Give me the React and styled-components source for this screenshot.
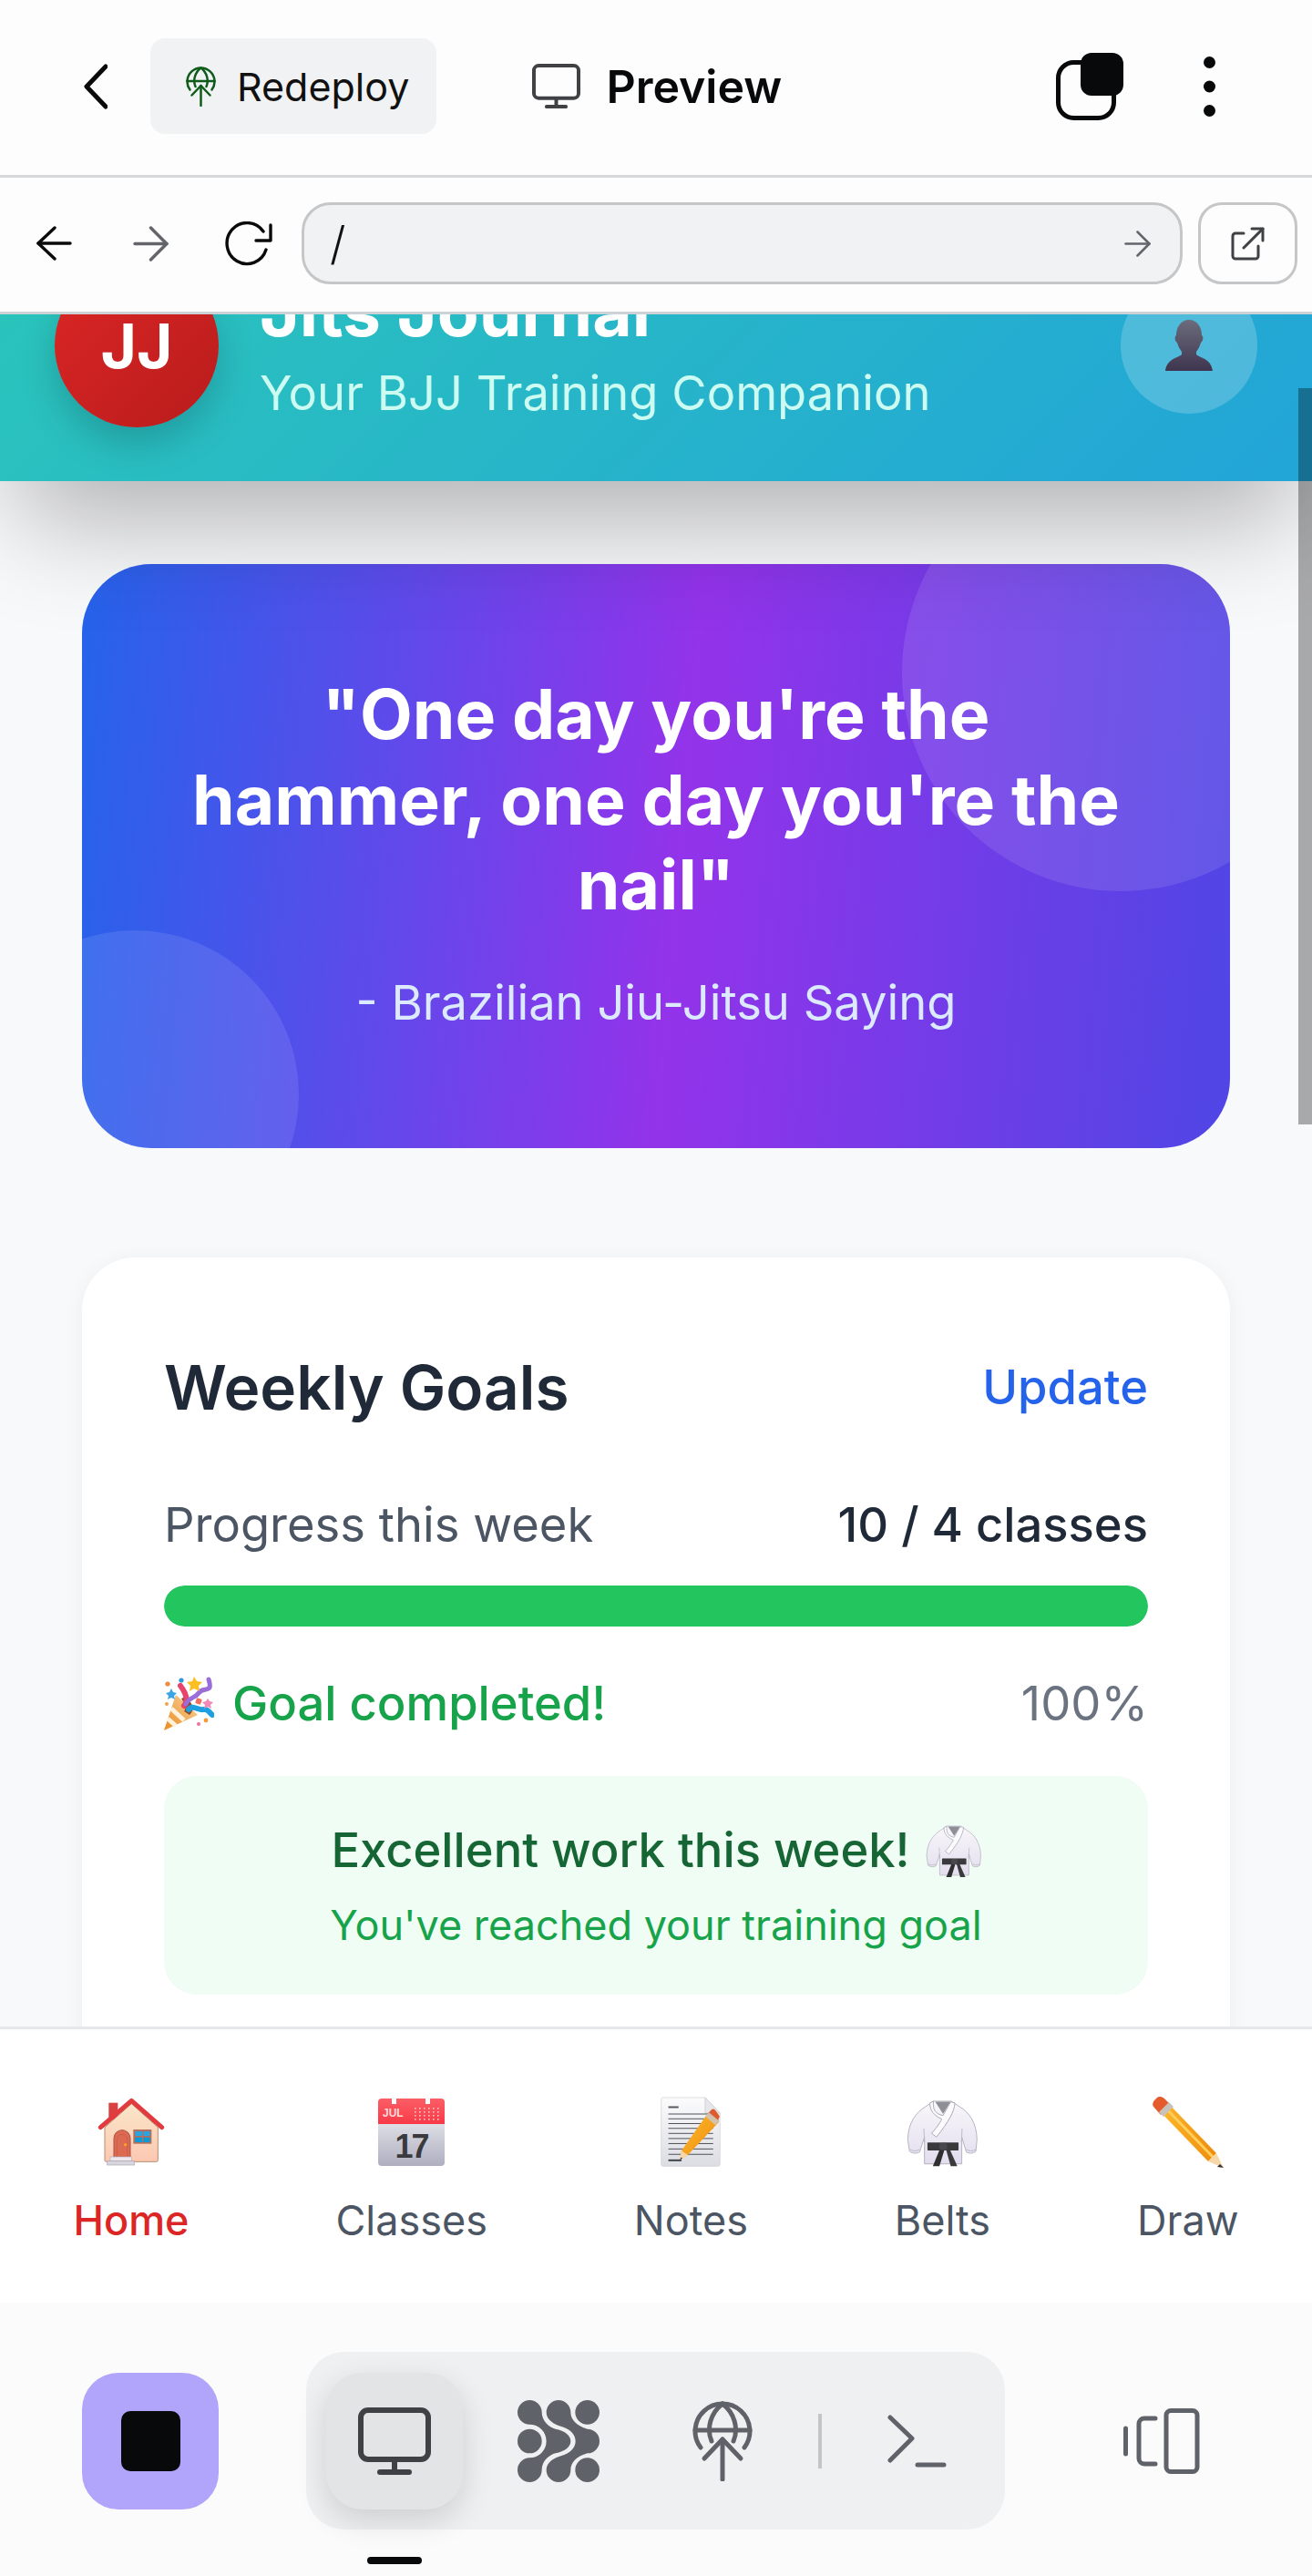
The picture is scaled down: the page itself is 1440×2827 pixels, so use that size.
import React from "react";
import styled, { createGlobalStyle } from "styled-components";

const GlobalStyle = createGlobalStyle`
  * {
    box-sizing: border-box;
  }
  body {
    margin: 0;
    background: #fbfbfb;
    font-family: Inter, "Noto Sans", sans-serif;
    -webkit-font-smoothing: antialiased;
  }
`;

const BackIcon = () => (
  <svg width="26" height="50" viewBox="0 0 26 50" fill="none" stroke="#0a0a0a" strokeWidth="5" strokeLinecap="round" strokeLinejoin="round">
    <path d="M24 3L3 25L24 47" />
  </svg>
);

const GlobeUpIcon = ({ width, color }) => (
  <svg width={width} height={(width * 88) / 66} viewBox="0 0 66 88" fill="none" stroke={color} strokeWidth="5" strokeLinecap="round" strokeLinejoin="round">
    <path d="M9 51A30 30 0 1 1 57 51" />
    <path d="M3 32H63" />
    <path d="M33 3C20 13 15 30 21 44" />
    <path d="M33 3C46 13 51 30 45 44" />
    <path d="M33 86V42" />
    <path d="M13 63L33 42L53 63" />
  </svg>
);

const MonitorIcon = ({ width, color }) => (
  <svg width={width} height={(width * 74) / 80} viewBox="0 0 80 74" fill="none" stroke={color} strokeWidth="6" strokeLinecap="round" strokeLinejoin="round">
    <rect x="3" y="3" width="74" height="54" rx="8" />
    <path d="M40 58V70" />
    <path d="M24 71H56" />
  </svg>
);

const TabsIcon = () => (
  <svg width="74" height="74" viewBox="0 0 74 74">
    <rect x="2.5" y="10.5" width="61" height="61" rx="17" fill="none" stroke="#08090b" strokeWidth="5" />
    <rect x="27" y="0" width="47" height="47" rx="12" fill="#08090b" />
  </svg>
);

const KebabIcon = () => (
  <svg width="13" height="66" viewBox="0 0 13 66" fill="#08090b">
    <circle cx="6.5" cy="6.5" r="6.5" />
    <circle cx="6.5" cy="33" r="6.5" />
    <circle cx="6.5" cy="59.5" r="6.5" />
  </svg>
);

const ArrowLeft = () => (
  <svg width="39" height="38" viewBox="0 0 39 38" fill="none" stroke="#0a0a0a" strokeWidth="3.4" strokeLinecap="round" strokeLinejoin="round">
    <path d="M37 19H2" />
    <path d="M20 2L2 19L20 36" />
  </svg>
);

const ArrowRight = ({ size, color }) => (
  <svg width={size} height={size} viewBox="0 0 38 38" fill="none" stroke={color} strokeWidth="3.4" strokeLinecap="round" strokeLinejoin="round">
    <path d="M2 19H36" />
    <path d="M19 2L36 19L19 36" />
  </svg>
);

const ReloadIcon = () => (
  <svg width="53" height="49" viewBox="0 0 53 49" fill="none" stroke="#0a0a0a" strokeWidth="3.4" strokeLinecap="round" strokeLinejoin="round">
    <path d="M46 31A22 22.5 0 1 1 43 11" />
    <path d="M51 4V21H35" />
  </svg>
);

const ExternalIcon = () => (
  <svg width="37" height="37" viewBox="0 0 37 37" fill="none" stroke="#3f4145" strokeWidth="3" strokeLinecap="round" strokeLinejoin="round">
    <path d="M14 7H5a3 3 0 0 0-3 3V32a3 3 0 0 0 3 3H27a3 3 0 0 0 3-3V21" />
    <path d="M14 23L35 2" />
    <path d="M23 2H35V15" />
  </svg>
);

const LogoIcon = () => (
  <svg width="90" height="90" viewBox="45 45 270 270" fill="#5f6268">
    <circle cx="275" cy="85" r="40" />
    <circle cx="85" cy="180" r="40" />
    <circle cx="275" cy="275" r="40" />
    <path d="M85 45A40 40 0 0 1 125 85C125 115 150 135 170 140C200 146 220 160 220 180C220 200 200 214 170 220C150 225 125 245 125 275A40 40 0 0 1 45 275A40 40 0 0 1 85 235A55 55 0 0 0 85 125A40 40 0 0 1 85 45Z" />
    <path d="M180 45A40 40 0 0 1 220 85C220 110 240 130 275 140A40 40 0 0 1 275 220C240 230 220 250 220 275A40 40 0 0 1 140 275C140 250 165 235 190 228C220 220 236 200 236 180C236 160 220 140 190 132C165 125 140 110 140 85A40 40 0 0 1 180 45Z" />
  </svg>
);

const TerminalIcon = () => (
  <svg width="66" height="58" viewBox="0 0 66 58" fill="none" stroke="#5f6268" strokeWidth="5" strokeLinecap="round" strokeLinejoin="round">
    <path d="M3 3L27 26L3 50" />
    <path d="M33 55H62" />
  </svg>
);

const PaneIcon = () => (
  <svg width="84" height="72" viewBox="0 0 84 72" fill="none" stroke="#5f6268" strokeWidth="5" strokeLinecap="round" strokeLinejoin="round">
    <path d="M2.5 22V50" />
    <path d="M35 11H23a6 6 0 0 0-6 6V55a6 6 0 0 0 6 6H35" />
    <rect x="47" y="2.5" width="34" height="67" rx="5" />
  </svg>
);

const BustEmoji = () => (
  <svg width="52" height="57" viewBox="0 0 52 57">
    <defs>
      <linearGradient id="bustFill" x1="0" y1="0" x2="0" y2="1">
        <stop offset="0" stopColor="#6b6c7c" />
        <stop offset="1" stopColor="#3f3550" />
      </linearGradient>
    </defs>
    <path
      fill="url(#bustFill)"
      d="M26 0C17 0 12 8 12 17C10 18 10 23 13 25C14 29 16 32 18 35V38C14 42 2 42 0 56H52C50 42 38 42 34 38V35C36 32 38 29 39 25C42 23 42 18 40 17C40 8 35 0 26 0Z"
    />
  </svg>
);

const HouseEmoji = () => (
  <svg width="74" height="76" viewBox="38 38 222 228">
    <defs>
      <linearGradient id="wallFill" x1="0" y1="0" x2="0" y2="1">
        <stop offset="0" stopColor="#f9e6c8" />
        <stop offset="1" stopColor="#fdc8b2" />
      </linearGradient>
    </defs>
    <rect x="75" y="55" width="30" height="55" fill="#d9403f" />
    <path d="M150 58L62 136V244a5 5 0 0 0 5 5H232a5 5 0 0 0 5-5V136Z" fill="url(#wallFill)" stroke="#b98d6d" strokeWidth="3" />
    <path d="M48 136L150 48L250 136" fill="none" stroke="#e23b3f" strokeWidth="15" strokeLinecap="round" strokeLinejoin="round" />
    <path d="M92 234V172a27 27 0 0 1 54 0V234Z" fill="#dc6a52" stroke="#a9503e" strokeWidth="3" />
    <path d="M102 234V176a17 17 0 0 1 34 0V234" fill="none" stroke="#c8543f" strokeWidth="2" />
    <circle cx="130" cy="193" r="5" fill="#f5a623" />
    <rect x="156" y="143" width="60" height="47" fill="#b06f5f" />
    <rect x="162" y="149" width="23" height="15" fill="#2aa4e0" />
    <rect x="189" y="149" width="22" height="15" fill="#2aa4e0" />
    <rect x="162" y="169" width="23" height="16" fill="#0c9ad6" />
    <rect x="189" y="169" width="22" height="16" fill="#0c9ad6" />
    <rect x="80" y="233" width="70" height="14" fill="#ece8ee" stroke="#b5b0bc" strokeWidth="2" />
    <rect x="70" y="247" width="90" height="13" fill="#d9d5de" stroke="#aaa5b2" strokeWidth="2" />
  </svg>
);

const CalendarEmoji = () => (
  <svg width="73" height="74" viewBox="0 0 73 74">
    <defs>
      <linearGradient id="calendarPage" x1="0" y1="0" x2="0" y2="1">
        <stop offset="0" stopColor="#fbfbfc" />
        <stop offset="1" stopColor="#aeaec0" />
      </linearGradient>
      <linearGradient id="calendarTop" x1="0" y1="0" x2="0" y2="1">
        <stop offset="0" stopColor="#fb5e66" />
        <stop offset="1" stopColor="#f83a48" />
      </linearGradient>
    </defs>
    <rect x="0" y="0" width="73" height="74" rx="4" fill="url(#calendarPage)" />
    <path d="M4 0H69a4 4 0 0 1 4 4V28H0V4a4 4 0 0 1 4-4Z" fill="url(#calendarTop)" />
    <rect x="15" y="0" width="5" height="6" fill="#fff" />
    <rect x="52" y="0" width="5" height="6" fill="#fff" />
    <text x="5" y="20" fontFamily="'Liberation Sans', sans-serif" fontSize="12" fontWeight="700" fill="#ffd9dc">
      JUL
    </text>
    {[10, 14, 18, 22].map((y) =>
      [40, 45, 50, 55, 60, 65].map((x) => (
        <rect key={`${x}-${y}`} x={x} y={y} width="1.6" height="1.6" fill="#ffc9cd" />
      ))
    )}
    <text x="36.5" y="65" textAnchor="middle" fontFamily="'Liberation Sans', sans-serif" fontSize="36" fontWeight="700" letterSpacing="-2" fill="#3a3a3e">
      17
    </text>
  </svg>
);

const MemoEmoji = () => (
  <svg width="68" height="78" viewBox="15 15 203 238">
    <defs>
      <linearGradient id="memoPaper" x1="0" y1="0" x2="0" y2="1">
        <stop offset="0" stopColor="#fbfbfc" />
        <stop offset="1" stopColor="#dcdde3" />
      </linearGradient>
      <linearGradient id="memoPencil" x1="0" y1="0" x2="1" y2="1">
        <stop offset="0" stopColor="#fdbb2e" />
        <stop offset="1" stopColor="#ee8a0c" />
      </linearGradient>
    </defs>
    <path d="M24 18H165L215 70V240a8 8 0 0 1-8 8H24a6 6 0 0 1-6-6V24a6 6 0 0 1 6-6Z" fill="url(#memoPaper)" stroke="#cfd0d6" strokeWidth="2" />
    <path d="M165 18V70H215Z" fill="#e6e7eb" stroke="#c4c5cb" strokeWidth="2" />
    <path d="M42 50H76" stroke="#55585f" strokeWidth="6" />
    <g stroke="#4c4f57" strokeWidth="3">
      {[73, 89, 105, 121, 138, 155, 172, 190, 208].map((y) => (
        <path key={y} d={`M42 ${y}H192`} />
      ))}
    </g>
    <path d="M42 228H86" stroke="#3d4047" strokeWidth="6" />
    <path d="M173 72L210 101L107 210L80 226L86 196Z" fill="url(#memoPencil)" />
    <path d="M86 196L107 210L80 226Z" fill="#f6d7a8" />
    <path d="M85 218L89 222L80 226Z" fill="#2f2f33" />
    <path d="M173 72L185 60a10 10 0 0 1 14 0L210 75a9 9 0 0 1 0 13L210 101Z" fill="#dc5a2c" />
    <path d="M165 80L178 68L212 96L199 110Z" fill="#cfc7bd" opacity="0.9" />
  </svg>
);

const GiEmoji = ({ width, id }) => (
  <svg width={width} height={(width * 76) / 78} viewBox="28 18 238 232">
    <defs>
      <linearGradient id={id} x1="0" y1="0" x2="0" y2="1">
        <stop offset="0" stopColor="#f8f7fa" />
        <stop offset="1" stopColor="#e3ddee" />
      </linearGradient>
    </defs>
    <path d="M118 30H178L205 48C238 68 262 100 264 158L260 198C250 206 238 206 228 200L213 150V240H88V150L72 200C62 206 50 206 38 198L32 158C34 100 60 68 92 48Z" fill={`url(#${id})`} stroke="#b5b2c0" strokeWidth="3" />
    <path d="M124 32H176L150 72Z" fill="#8e8e96" />
    <path d="M118 30C116 60 124 72 150 78L176 32L190 36C188 64 170 98 128 150L112 138C134 112 144 96 146 90C120 78 106 62 106 36Z" fill="#fcfcfe" stroke="#a9a6b4" strokeWidth="3" />
    <path d="M86 122L88 168M214 122L212 168M40 192C50 198 62 198 72 192M228 192C238 198 250 198 260 192" stroke="#bcb9c7" strokeWidth="3" fill="none" />
    <rect x="98" y="168" width="104" height="27" rx="2" fill="#3a3a3d" />
    <path d="M142 184L116 248H138L154 196Z" fill="#2f2f32" />
    <path d="M158 184L176 248H198L172 190Z" fill="#3a3a3d" />
    <rect x="138" y="170" width="26" height="24" rx="7" fill="#49494d" />
  </svg>
);

const PencilEmoji = () => (
  <svg width="78" height="78" viewBox="0 0 78 78">
    <defs>
      <linearGradient id="pencilBody" x1="0" y1="0" x2="1" y2="0">
        <stop offset="0" stopColor="#fdba2c" />
        <stop offset="1" stopColor="#ee8b0b" />
      </linearGradient>
    </defs>
    <path d="M7 15L16 6L70 62L61 71Z" fill="url(#pencilBody)" />
    <path d="M12 10L66 66" stroke="#ffce5c" strokeWidth="3" />
    <path d="M2 12C-1 9 0 6 3 3L5 1C8 -1 10 0 13 2L20 9L9 20Z" fill="#e45c2b" />
    <path d="M7 17L18 6L23 11L12 22Z" fill="#c9c2b9" />
    <path d="M61 71L70 62L78 78Z" fill="#f6d7a8" />
    <path d="M74 74L78 78L71 77Z" fill="#2f2f33" />
  </svg>
);

const PartyEmoji = () => (
  <svg width="55" height="59" viewBox="0 0 55 59">
    <defs>
      <linearGradient id="coneFill" x1="0" y1="1" x2="1" y2="0">
        <stop offset="0" stopColor="#ea8a1c" />
        <stop offset="1" stopColor="#f8d7a6" />
      </linearGradient>
    </defs>
    <path d="M0 59L13 20L37 42Z" fill="url(#coneFill)" />
    <path d="M8 35L22 48M4 46L13 54" stroke="#fff3df" strokeWidth="5" fill="none" />
    <path d="M19 24C24 32 24 36 22 38L28 42C34 36 32 30 24 22Z" fill="#8a4a26" />
    <path d="M22 32C27 26 24 18 18 10" stroke="#e8436a" strokeWidth="6" fill="none" strokeLinecap="round" />
    <path d="M24 30C28 22 34 24 38 18C42 12 47 16 50 12C51 9 50 6 49 3" stroke="#9a6ddb" strokeWidth="5" fill="none" strokeLinecap="round" />
    <path d="M27 36C32 30 38 38 44 36C48 35 50 40 53 42" stroke="#1e9fe0" strokeWidth="6" fill="none" strokeLinecap="round" />
    <path d="M33 0L36 5L42 6L38 10L39 16L33 13L28 16L29 10L25 6L31 5Z" fill="#fbbf24" />
    <path d="M8 13L10 17L14 18L11 21L12 25L8 23L4 25L5 21L2 18L6 17Z" fill="#3ba4e8" />
    <circle cx="4" cy="8" r="2.6" fill="#f08a3c" />
    <circle cx="19" cy="4" r="2.6" fill="#2e97dc" />
    <circle cx="3" cy="30" r="2" fill="#f4a24a" />
    <rect x="35" y="24" width="6" height="6" rx="1" fill="#ef6f5c" transform="rotate(20 38 27)" />
    <path d="M48 24L50 27L54 28L51 31L52 35L48 33L44 35L45 31L42 28L46 27Z" fill="#f28ab8" />
    <circle cx="46" cy="48" r="2.4" fill="#f59a3c" />
    <circle cx="38" cy="52" r="2" fill="#ef6f9c" />
  </svg>
);

const Page = styled.div`
  width: 1440px;
  height: 2827px;
  overflow: hidden;
  background: #fbfbfb;
`;

const TopBar = styled.header`
  height: 195px;
  padding: 0 106px 3px 92px;
  display: flex;
  align-items: center;
  background: #fdfdfd;
  border-bottom: 3px solid #d5d7d9;
`;

const RedeployButton = styled.div`
  height: 105px;
  margin-left: 47px;
  padding: 0 30px 0 39px;
  display: flex;
  align-items: center;
  gap: 23px;
  background: #f1f2f4;
  border-radius: 16px;
  font-size: 43px;
  color: #111;
`;

const PreviewTab = styled.div`
  margin-left: 105px;
  display: flex;
  align-items: center;
  gap: 28px;
  font-size: 50px;
  font-weight: 600;
  color: #08090b;
`;

const TopActions = styled.div`
  margin-left: auto;
  display: flex;
  align-items: center;
  gap: 88px;
`;

const UrlRow = styled.div`
  height: 150px;
  padding: 0 16px 3px 40px;
  display: flex;
  align-items: center;
  background: #fdfdfd;
  border-bottom: 3px solid #ccd2d5;
`;

const HistoryButton = styled.div`
  display: flex;
  margin-right: ${(p) => p.$gap}px;
`;

const UrlField = styled.div`
  width: 967px;
  height: 90px;
  padding: 0 32px 0 28px;
  display: flex;
  align-items: center;
  justify-content: space-between;
  background: #f1f2f4;
  border: 3px solid #c4c6c8;
  border-radius: 32px;
  font-size: 50px;
  font-weight: 300;
  color: #111;
`;

const ExternalButton = styled.div`
  width: 109px;
  height: 90px;
  margin-left: 17px;
  display: flex;
  align-items: center;
  justify-content: center;
  border: 3px solid #c4c6c8;
  border-radius: 26px;
`;

const AppViewport = styled.main`
  position: relative;
  height: 1879px;
  overflow: hidden;
  background: #f8f9fb;
`;

const ScrollThumb = styled.div`
  position: absolute;
  top: 81px;
  right: 0;
  z-index: 3;
  width: 15px;
  height: 808px;
  background: rgba(0, 0, 0, 0.32);
`;

const AppHeader = styled.div`
  position: relative;
  z-index: 2;
  margin-top: -115px;
  padding: 59px 60px;
  display: flex;
  align-items: center;
  gap: 45px;
  background: linear-gradient(135deg, #2bc6ba, #22a4d8);
  box-shadow: 0 60px 120px -20px rgba(0, 0, 0, 0.3);
`;

const Avatar = styled.div`
  width: 180px;
  height: 180px;
  flex-shrink: 0;
  display: flex;
  align-items: center;
  justify-content: center;
  border-radius: 50%;
  background: linear-gradient(135deg, #dc2626, #b91c1c);
  box-shadow: 0 18px 40px rgba(0, 0, 0, 0.18);
  font-size: 67.5px;
  font-weight: 700;
  color: #fff;
`;

const BrandText = styled.div`
  flex: 1;
`;

const BrandTitle = styled.h1`
  margin: 0;
  font-size: 75px;
  line-height: 105px;
  font-weight: 700;
  color: #fff;
`;

const BrandSubtitle = styled.p`
  margin: 0;
  font-size: 52.5px;
  line-height: 75px;
  color: #ccfbf1;
`;

const ProfileButton = styled.div`
  width: 150px;
  height: 150px;
  display: flex;
  align-items: center;
  justify-content: center;
  border-radius: 50%;
  background: rgba(255, 255, 255, 0.2);
`;

const Content = styled.div`
  padding: 91px 90px 0;
  display: flex;
  flex-direction: column;
  gap: 120px;
`;

const QuoteCard = styled.section`
  position: relative;
  overflow: hidden;
  padding: 118px 110px 122px;
  border-radius: 76px;
  background: linear-gradient(95deg, #2563eb, #9333ea 52%, #4f46e5);
  text-align: center;
`;

const QuoteBlob = styled.div`
  position: absolute;
  width: ${(p) => p.$size}px;
  height: ${(p) => p.$size}px;
  border-radius: 50%;
  background: rgba(255, 255, 255, 0.1);
  ${(p) => (p.$corner === "top" ? "top: -121px; right: -120px;" : "bottom: -121px; left: -122px;")}
`;

const QuoteText = styled.p`
  position: relative;
  margin: 0 0 45px;
  font-size: 75px;
  line-height: 93.6px;
  font-weight: 700;
  color: #fff;
`;

const QuoteSource = styled.p`
  position: relative;
  margin: 0;
  font-size: 52.5px;
  line-height: 75px;
  color: #dbeafe;
`;

const GoalsCard = styled.section`
  padding: 90px;
  background: #fff;
  border-radius: 58px;
  box-shadow: 0 4px 24px rgba(0, 0, 0, 0.05);
`;

const CardHead = styled.div`
  display: flex;
  align-items: center;
  justify-content: space-between;
  margin-bottom: 61px;
`;

const CardTitle = styled.h2`
  margin: 0;
  font-size: 67.5px;
  line-height: 105px;
  font-weight: 600;
  color: #1f2937;
`;

const UpdateLink = styled.span`
  font-size: 52.5px;
  font-weight: 500;
  color: #2563eb;
`;

const StatRow = styled.div`
  display: flex;
  align-items: center;
  justify-content: space-between;
  margin-bottom: ${(p) => p.$gap}px;
  font-size: 52.5px;
  line-height: 75px;
`;

const StatLabel = styled.span`
  color: #4b5563;
`;

const StatValue = styled.span`
  font-weight: 500;
  color: #1f2937;
`;

const ProgressTrack = styled.div`
  height: 45px;
  margin-bottom: 47px;
  border-radius: 23px;
  background: #e5e7eb;
  overflow: hidden;
`;

const ProgressFill = styled.div`
  height: 100%;
  border-radius: 23px;
  background: #22c55e;
`;

const GoalDone = styled.span`
  display: flex;
  align-items: center;
  gap: 20px;
  font-weight: 500;
  color: #16a34a;
`;

const Percent = styled.span`
  color: #6b7280;
`;

const SuccessBox = styled.div`
  padding: 44px 0 46px;
  border-radius: 36px;
  background: #f0fdf4;
  text-align: center;
`;

const SuccessTitle = styled.p`
  margin: 0 0 15px;
  display: flex;
  align-items: center;
  justify-content: center;
  gap: 17px;
  font-size: 52.5px;
  line-height: 75px;
  font-weight: 500;
  color: #166534;
`;

const SuccessText = styled.p`
  margin: 0;
  font-size: 45px;
  line-height: 60px;
  color: #16a34a;
`;

const BottomNav = styled.nav`
  height: 303px;
  padding-top: 74px;
  display: flex;
  justify-content: space-around;
  align-items: flex-start;
  background: #fff;
  border-top: 3px solid #e5e7eb;
`;

const NavItem = styled.div`
  display: flex;
  flex-direction: column;
  align-items: center;
  gap: 29px;
  font-size: 45px;
  line-height: 58px;
  font-weight: ${(p) => (p.$active ? 500 : 400)};
  color: ${(p) => (p.$active ? "#dc2626" : "#4b5563")};
`;

const NavIcon = styled.div`
  height: 78px;
  display: flex;
  align-items: center;
  justify-content: center;
`;

const ToolDock = styled.div`
  height: 300px;
  padding-top: 54px;
  background: #fbfbfb;
`;

const ToolRow = styled.div`
  padding-left: 90px;
  display: flex;
  align-items: center;
`;

const StopButton = styled.div`
  width: 150px;
  height: 150px;
  display: flex;
  align-items: center;
  justify-content: center;
  border-radius: 40px;
  background: #b0a5fb;
`;

const StopSquare = styled.div`
  width: 65px;
  height: 66px;
  border-radius: 10px;
  background: #08090b;
`;

const ToolGroup = styled.div`
  width: 767px;
  height: 195px;
  margin-left: 96px;
  padding: 0 21px 0 22px;
  display: flex;
  align-items: center;
  gap: 30px;
  border-radius: 42px;
  background: #eff0f2;
`;

const ToolTile = styled.div`
  width: 150px;
  height: 150px;
  flex-shrink: 0;
  display: flex;
  align-items: center;
  justify-content: center;
  border-radius: 40px;
  background: ${(p) => (p.$active ? "#e3e4e6" : "transparent")};
  box-shadow: ${(p) => (p.$active ? "0 12px 34px rgba(0, 0, 0, 0.14)" : "none")};
`;

const ToolDivider = styled.div`
  width: 4px;
  height: 60px;
  flex-shrink: 0;
  background: #c4c5c7;
`;

const PaneButton = styled.div`
  margin-left: 130px;
  display: flex;
`;

const HomeIndicator = styled.div`
  width: 60px;
  height: 8px;
  margin: 30px 0 0 403px;
  border-radius: 4px;
  background: #08090b;
`;

const navItems = [
  { label: "Home", icon: <HouseEmoji />, active: true },
  { label: "Classes", icon: <CalendarEmoji /> },
  { label: "Notes", icon: <MemoEmoji /> },
  { label: "Belts", icon: <GiEmoji width={78} id="giNav" /> },
  { label: "Draw", icon: <PencilEmoji /> },
];

export default function App() {
  return (
    <Page>
      <GlobalStyle />
      <TopBar>
        <BackIcon />
        <RedeployButton>
          <GlobeUpIcon width={33} color="#0f5c1a" />
          Redeploy
        </RedeployButton>
        <PreviewTab>
          <MonitorIcon width={53} color="#3f4145" />
          Preview
        </PreviewTab>
        <TopActions>
          <TabsIcon />
          <KebabIcon />
        </TopActions>
      </TopBar>
      <UrlRow>
        <HistoryButton $gap={67}>
          <ArrowLeft />
        </HistoryButton>
        <HistoryButton $gap={61}>
          <ArrowRight size={39} color="#63656b" />
        </HistoryButton>
        <HistoryButton $gap={32}>
          <ReloadIcon />
        </HistoryButton>
        <UrlField>
          /
          <ArrowRight size={29} color="#63656b" />
        </UrlField>
        <ExternalButton>
          <ExternalIcon />
        </ExternalButton>
      </UrlRow>
      <AppViewport>
        <ScrollThumb />
        <AppHeader>
          <Avatar>JJ</Avatar>
          <BrandText>
            <BrandTitle>Jits Journal</BrandTitle>
            <BrandSubtitle>Your BJJ Training Companion</BrandSubtitle>
          </BrandText>
          <ProfileButton>
            <BustEmoji />
          </ProfileButton>
        </AppHeader>
        <Content>
          <QuoteCard>
            <QuoteBlob $size={480} $corner="top" />
            <QuoteBlob $size={360} $corner="bottom" />
            <QuoteText>"One day you're the hammer, one day you're the nail"</QuoteText>
            <QuoteSource>- Brazilian Jiu-Jitsu Saying</QuoteSource>
          </QuoteCard>
          <GoalsCard>
            <CardHead>
              <CardTitle>Weekly Goals</CardTitle>
              <UpdateLink>Update</UpdateLink>
            </CardHead>
            <StatRow $gap={29}>
              <StatLabel>Progress this week</StatLabel>
              <StatValue>10 / 4 classes</StatValue>
            </StatRow>
            <ProgressTrack>
              <ProgressFill style={{ width: `${Math.min(100, (10 / 4) * 100)}%` }} />
            </ProgressTrack>
            <StatRow $gap={42}>
              <GoalDone>
                <PartyEmoji />
                Goal completed!
              </GoalDone>
              <Percent>100%</Percent>
            </StatRow>
            <SuccessBox>
              <SuccessTitle>
                Excellent work this week!
                <GiEmoji width={61} id="giBox" />
              </SuccessTitle>
              <SuccessText>You've reached your training goal</SuccessText>
            </SuccessBox>
          </GoalsCard>
        </Content>
      </AppViewport>
      <BottomNav>
        {navItems.map((item) => (
          <NavItem key={item.label} $active={item.active}>
            <NavIcon>{item.icon}</NavIcon>
            {item.label}
          </NavItem>
        ))}
      </BottomNav>
      <ToolDock>
        <ToolRow>
          <StopButton>
            <StopSquare />
          </StopButton>
          <ToolGroup>
            <ToolTile $active>
              <MonitorIcon width={80} color="#3f4145" />
            </ToolTile>
            <ToolTile>
              <LogoIcon />
            </ToolTile>
            <ToolTile>
              <GlobeUpIcon width={66} color="#5f6268" />
            </ToolTile>
            <ToolDivider />
            <ToolTile>
              <TerminalIcon />
            </ToolTile>
          </ToolGroup>
          <PaneButton>
            <PaneIcon />
          </PaneButton>
        </ToolRow>
        <HomeIndicator />
      </ToolDock>
    </Page>
  );
}
